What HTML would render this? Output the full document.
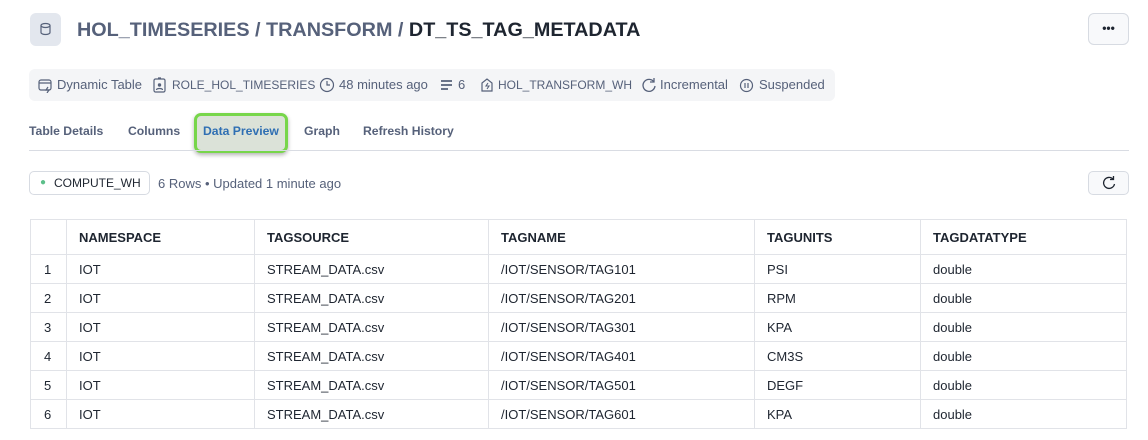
<!DOCTYPE html><html><head><style>
body{margin:0;width:1148px;height:440px;overflow:hidden;background:#fff;font-family:"Liberation Sans",sans-serif;color:#1e2530;position:relative}
.a{position:absolute}
.ico{position:absolute;left:30px;top:13px;width:31px;height:33px;background:#e3e7ee;border-radius:6px}
h1{position:absolute;left:77px;top:19px;margin:0;font-size:19.8px;font-weight:bold;color:#56617a;white-space:nowrap}
h1 b{color:#1e2530}
.more{position:absolute;left:1088px;top:13px;width:41px;height:32px;border:1px solid #d7dbe2;border-radius:6px;background:#f8f9fb;text-align:center;line-height:28px;font-size:12px;font-weight:bold;box-sizing:border-box}
.meta{position:absolute;left:29px;top:69px;width:806px;height:32px;background:#f4f5f7;border-radius:6px;font-size:13px;color:#56617a;white-space:nowrap}
.meta span{position:absolute;top:8px}
.meta span.u{font-size:12px;top:9px}
.tabs{font-size:12.2px;font-weight:bold;color:#56617a;position:absolute;top:124px}
.line{position:absolute;left:29px;top:150px;width:1100px;height:1px;background:#d9dce3}
.hl{position:absolute;left:194px;top:113px;width:94px;height:40px;border:3px solid #77d64a;border-radius:7px;background:#dbe2d8;box-shadow:0 2px 4px rgba(0,0,0,.3);box-sizing:border-box}
.wh{position:absolute;left:29px;top:171px;width:121px;height:24px;border:1px solid #d7dbe2;border-radius:5px;font-size:12px;line-height:23px;box-sizing:border-box}
table{position:absolute;left:30px;top:219px;border-collapse:collapse;font-size:13px;width:1097px}
td{border:1px solid #e1e3e8;height:28px;padding:0 0 0 12px}
tr.h td{height:34px;font-weight:bold}
td:first-child{padding-left:13px}
</style></head><body>
<div class="ico"><svg width="31" height="33"><ellipse cx="15.5" cy="12.5" rx="4.5" ry="2" fill="none" stroke="#56617a" stroke-width="1.2"/><path d="M11 12.5v7c0 1.1 2 2 4.5 2s4.5-.9 4.5-2v-7" fill="none" stroke="#56617a" stroke-width="1.2"/></svg></div>
<h1>HOL_TIMESERIES / TRANSFORM / <b>DT_TS_TAG_METADATA</b></h1>
<div class="more">•••</div>
<div class="meta">
<svg class="a" style="left:9px;top:9px" width="15" height="15"><rect x="1" y="2" width="12" height="10" rx="2" fill="none" stroke="#56617a" stroke-width="1.2"/><path d="M1 5h12M10 9l-2 3h3l-2 3" fill="none" stroke="#56617a" stroke-width="1.2"/></svg>
<span style="left:28px">Dynamic Table</span>
<svg class="a" style="left:124px;top:8px" width="14" height="16"><rect x="1" y="2" width="11" height="13" rx="1.5" fill="none" stroke="#56617a" stroke-width="1.2"/><circle cx="6.5" cy="8" r="1.7" fill="#56617a"/><path d="M3.5 13c0-2 6-2 6 0M5 1h3" stroke="#56617a" fill="none" stroke-width="1.2"/></svg>
<span class="u" style="left:143px">ROLE_HOL_TIMESERIES</span>
<svg class="a" style="left:290px;top:8px" width="16" height="16"><circle cx="8" cy="8" r="6.5" fill="none" stroke="#56617a" stroke-width="1.2"/><path d="M8 4v4h3" fill="none" stroke="#56617a" stroke-width="1.2"/></svg>
<span style="left:310px">48 minutes ago</span>
<svg class="a" style="left:411px;top:10px" width="14" height="12"><path d="M1 2h11M1 6h11M1 10h7" stroke="#56617a" stroke-width="1.8"/></svg>
<span style="left:429px">6</span>
<svg class="a" style="left:451px;top:8px" width="14" height="16"><path d="M2 6l5-4 5 4v8H2z" fill="none" stroke="#56617a" stroke-width="1.2"/><path d="M8 6l-2 3h3l-2 3" fill="none" stroke="#56617a" stroke-width="1.1"/></svg>
<span class="u" style="left:469px">HOL_TRANSFORM_WH</span>
<svg class="a" style="left:612px;top:8px" width="16" height="16"><path d="M13 5A6 6 0 1 0 14 9" fill="none" stroke="#56617a" stroke-width="1.3"/><path d="M13 1v4H9" fill="none" stroke="#56617a" stroke-width="1.3"/></svg>
<span style="left:631px">Incremental</span>
<svg class="a" style="left:710px;top:9px" width="15" height="15"><circle cx="7.5" cy="7.5" r="6" fill="none" stroke="#56617a" stroke-width="1.2"/><path d="M6 5v5M9 5v5" stroke="#56617a" stroke-width="1.2"/></svg>
<span style="left:730px">Suspended</span>
</div>
<div class="hl"></div>
<div class="tabs" style="left:29px">Table Details</div>
<div class="tabs" style="left:128px">Columns</div>
<div class="tabs" style="left:203px;color:#2f6fb3">Data Preview</div>
<div class="tabs" style="left:304px">Graph</div>
<div class="tabs" style="left:363px">Refresh History</div>
<div class="line"></div>
<div class="wh"><span style="position:absolute;left:10px;top:-1px;color:#5cbf8a;font-size:10px">●</span><span style="position:absolute;left:24px">COMPUTE_WH</span></div>
<div class="a" style="left:158px;top:176px;font-size:13px;color:#56617a">6 Rows • Updated 1 minute ago</div>
<div class="a" style="left:1088px;top:171px;width:41px;height:24px;border:1px solid #d7dbe2;border-radius:5px;background:#f8f9fb;box-sizing:border-box"><svg style="position:absolute;left:12px;top:3px" width="16" height="16"><path d="M12 4A5.5 5.5 0 1 0 13.5 9" fill="none" stroke="#1e2530" stroke-width="1.3"/><path d="M12.5 1v3.5H9" fill="none" stroke="#1e2530" stroke-width="1.3"/></svg></div>
<table>
<tr class="h"><td style="width:22px"></td><td style="width:175px">NAMESPACE</td><td style="width:221px">TAGSOURCE</td><td style="width:253px">TAGNAME</td><td style="width:153px">TAGUNITS</td><td>TAGDATATYPE</td></tr>
<tr><td>1</td><td>IOT</td><td>STREAM_DATA.csv</td><td>/IOT/SENSOR/TAG101</td><td>PSI</td><td>double</td></tr>
<tr><td>2</td><td>IOT</td><td>STREAM_DATA.csv</td><td>/IOT/SENSOR/TAG201</td><td>RPM</td><td>double</td></tr>
<tr><td>3</td><td>IOT</td><td>STREAM_DATA.csv</td><td>/IOT/SENSOR/TAG301</td><td>KPA</td><td>double</td></tr>
<tr><td>4</td><td>IOT</td><td>STREAM_DATA.csv</td><td>/IOT/SENSOR/TAG401</td><td>CM3S</td><td>double</td></tr>
<tr><td>5</td><td>IOT</td><td>STREAM_DATA.csv</td><td>/IOT/SENSOR/TAG501</td><td>DEGF</td><td>double</td></tr>
<tr><td>6</td><td>IOT</td><td>STREAM_DATA.csv</td><td>/IOT/SENSOR/TAG601</td><td>KPA</td><td>double</td></tr>
</table>
</body></html>
